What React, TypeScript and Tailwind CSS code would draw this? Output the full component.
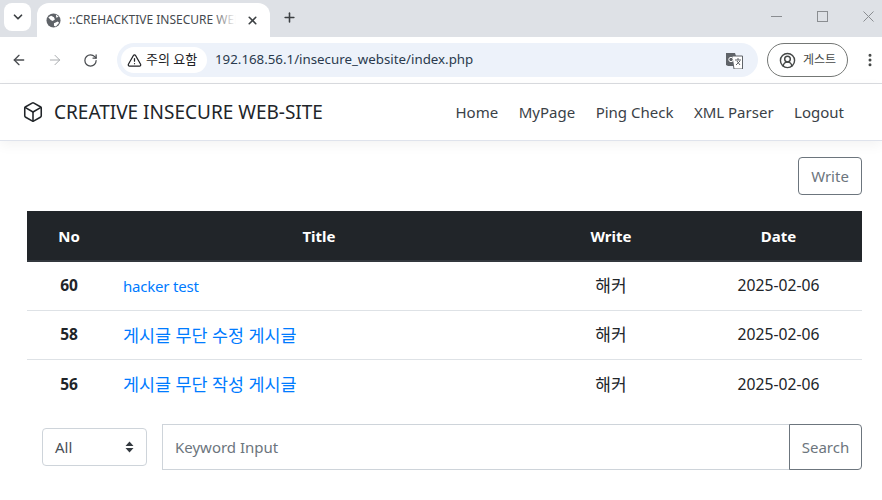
import React from 'react';
import { ArrowLeft, ArrowRight, ChevronDown, EllipsisVertical, Plus, RotateCw, TriangleAlert, X, CircleUserRound, Box } from 'lucide-react';

const posts = [
  { no: 60, title: 'hacker test', writer: '해커', date: '2025-02-06' },
  { no: 58, title: '게시글 무단 수정 게시글', writer: '해커', date: '2025-02-06' },
  { no: 56, title: '게시글 무단 작성 게시글', writer: '해커', date: '2025-02-06' },
];

const navItems = ['Home', 'MyPage', 'Ping Check', 'XML Parser', 'Logout'];

const BrowserChrome = () => (
  <div>
    <div className="h-[37px] bg-[#dee1e6] flex items-start">
      <div className="mt-[3px] ml-[4px] w-[27px] h-[28px] rounded-lg bg-white flex items-center justify-center text-[#3c4043]">
        <ChevronDown size={14} strokeWidth={3} />
      </div>
      <div className="mt-[3px] ml-[6px] w-[233px] h-[34px] bg-white rounded-t-xl flex items-center pl-[9px] pr-[6px]">
        <svg width="15" height="15" viewBox="0 0 16 16" className="shrink-0">
          <circle cx="8" cy="8" r="7.5" fill="#5f6368" />
          <path d="M2.5 4.5l3-1.5 3 1.5 1 2.5-2.5 1.5-2-1zM10.5 1.5l3 2.5-2.5 1zM8.5 11l4-2 1.5 1.5-3.5 4-2-1z" fill="#fff" />
        </svg>
        <div className="relative ml-[8px] w-[167px] overflow-hidden">
          <div className="text-[12px] text-[#45494e] whitespace-nowrap">::CREHACKTIVE INSECURE WEB</div>
          <div className="absolute inset-y-0 right-0 w-[24px] bg-gradient-to-r from-transparent to-white" />
        </div>
        <X size={13} strokeWidth={3} className="ml-[10px] text-[#3c4043]" />
      </div>
      <Plus size={15} strokeWidth={2.5} className="ml-[12px] mt-[10px] text-[#3c4043]" />
      <div className="ml-auto flex items-center text-[#8a8d91] mt-[11px]">
        <svg width="11" height="11" viewBox="0 0 11 11" className="mr-[35px]" stroke="currentColor" fill="none">
          <path d="M0 5.5h11" />
        </svg>
        <svg width="11" height="11" viewBox="0 0 11 11" className="mr-[35px]" stroke="currentColor" fill="none">
          <rect x="0.5" y="0.5" width="10" height="10" />
        </svg>
        <svg width="11" height="11" viewBox="0 0 11 11" className="mr-[8px]" stroke="currentColor" fill="none">
          <path d="M0.5 0.5l10 10M10.5 0.5l-10 10" />
        </svg>
      </div>
    </div>
    <div className="h-[47px] bg-white border-b border-[#dadce0] flex items-center">
      <ArrowLeft size={16} strokeWidth={2} className="ml-[11px] text-[#494c50]" />
      <ArrowRight size={16} strokeWidth={1.5} className="ml-[20px] text-[#a9acaf]" />
      <RotateCw size={15} strokeWidth={2} className="ml-[20px] text-[#494c50]" />
      <div className="ml-[19px] w-[641px] h-[34px] rounded-full bg-[#edf2fa] flex items-center pl-[4px] pr-[15px]">
        <div className="w-[86px] h-[26px] rounded-full bg-white flex items-center pl-[6px] text-[13px] text-[#202124]">
          <TriangleAlert size={15} strokeWidth={2} className="mr-[4px] shrink-0" />
          <span className="whitespace-nowrap">주의 요함</span>
        </div>
        <span className="ml-[8px] text-[13.3px] text-[#2a3a4d]">192.168.56.1/insecure_website/index.php</span>
        <svg width="17" height="17" viewBox="0 0 17 17" className="ml-auto">
          <path d="M0 1h9l1 3v10H2l-2-1z" fill="#5f6368" />
          <path d="M6 4h10.5v13H8z" fill="#fff" stroke="#5f6368" />
          <circle cx="5" cy="7.5" r="2.2" fill="none" stroke="#fff" />
          <path d="M9 8h6M12 6v2M10 13l4-4M11 9l3 4" stroke="#5f6368" />
        </svg>
      </div>
      <div className="ml-[9px] w-[81px] h-[34px] rounded-full border border-[#747775] flex items-center pl-[11px] text-[#444746]">
        <CircleUserRound size={17} strokeWidth={2} />
        <span className="ml-[7px] text-[12px] whitespace-nowrap">게스트</span>
      </div>
      <EllipsisVertical size={16} strokeWidth={2.5} className="ml-[14px] text-[#444746]" />
    </div>
  </div>
);

const App = () => (
  <div className="w-[882px] h-[500px] overflow-hidden bg-white font-['Noto_Sans','Noto_Sans_CJK_KR',sans-serif] text-[#212529]">
    <BrowserChrome />
    <nav className="h-[57px] border-b border-[#dfe3ec] shadow-[0_4px_12px_rgba(0,0,0,0.05)] flex items-center pl-[22px] pr-[38px]">
      <Box size={22} strokeWidth={1.7} />
      <span className="ml-[10px] text-[19px]">CREATIVE INSECURE WEB-SITE</span>
      <div className="ml-auto flex gap-[20.5px] text-[15px] text-[#3a4147]">
        {navItems.map((item) => (
          <a key={item} href="#">{item}</a>
        ))}
      </div>
    </nav>
    <main className="pl-[27px] pr-[20px]">
      <div className="flex justify-end pt-[16px] pb-[16px]">
        <button className="w-[64px] h-[38px] border border-[#6c757d] rounded text-[15px] text-[#6c757d]">Write</button>
      </div>
      <table className="w-[835px] table-fixed border-separate border-spacing-0 text-[15px]">
        <colgroup>
          <col className="w-[84px]" />
          <col className="w-[416px]" />
          <col className="w-[168px]" />
          <col className="w-[167px]" />
        </colgroup>
        <thead>
          <tr className="h-[51px] bg-[#212529] text-white font-bold">
            <th className="pt-[1px] border-b-2 border-[#32383e]">No</th>
            <th className="pt-[1px] border-b-2 border-[#32383e]">Title</th>
            <th className="pt-[1px] border-b-2 border-[#32383e]">Write</th>
            <th className="pt-[1px] border-b-2 border-[#32383e]">Date</th>
          </tr>
        </thead>
        <tbody>
          {posts.map((post, i) => {
            const line = i < posts.length - 1 ? 'border-b border-[#dee2e6]' : '';
            return (
              <tr key={post.no} className="h-[49px]">
                <td className={`text-center font-bold text-[15.5px] ${line}`}>{post.no}</td>
                <td className={`pl-[12px] ${i === 0 ? 'text-[15px] tracking-[-0.2px]' : 'text-[17.4px]'} ${line}`}>
                  <a href="#" className="text-[#007bff]">{post.title}</a>
                </td>
                <td className={`text-center text-[17px] ${line}`}>{post.writer}</td>
                <td className={`text-center text-[15.7px] ${line}`}>{post.date}</td>
              </tr>
            );
          })}
        </tbody>
      </table>
      <div className="flex items-center mt-[15px] ml-[15px] text-[15px]">
        <div className="w-[105px] h-[38px] border border-[#ced4da] rounded flex items-center justify-between pl-[12px] pr-[12px] text-[#495057]">
          <span>All</span>
          <svg width="9" height="12" viewBox="0 0 9 12" fill="#343a40">
            <path d="M4.5 0.5L8.5 5H0.5zM4.5 11.5L0.5 7H8.5z" />
          </svg>
        </div>
        <div className="ml-[15px] flex-1 h-[46px] border border-[#ced4da] flex items-center pl-[12px] text-[#6c757d]">Keyword Input</div>
        <button className="w-[73px] h-[46px] -ml-px border border-[#6c757d] rounded-r text-[#6c757d]">Search</button>
      </div>
    </main>
  </div>
);

export default App;
